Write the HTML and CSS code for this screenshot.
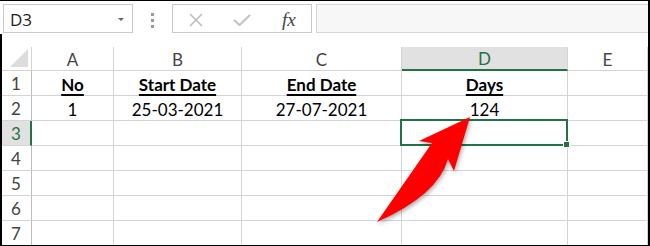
FILE: index.html
```html
<!DOCTYPE html>
<html lang="en">
<head>
    <meta charset="UTF-8">
    <title>Days between dates</title>
    <link rel="stylesheet" href="styles.css">
</head>
<body>
    <div class="frame">
        <div class="toolbar">
            <div class="name-box">
                <span>D3</span>
                <span class="caret"></span>
            </div>
            <div class="grip"><i></i><i></i><i></i></div>
            <div class="fx-buttons">
                <svg class="btn-icon" width="16" height="14" viewBox="0 0 16 14">
                    <path d="M2 1 L14 13 M14 1 L2 13" stroke="#bdbdbd" stroke-width="1.6" fill="none"/>
                </svg>
                <svg class="btn-icon" width="18" height="12" viewBox="0 0 18 12">
                    <path d="M1 6 L6.5 11 L17 1" stroke="#c4c4c4" stroke-width="2.2" fill="none"/>
                </svg>
                <span class="fx">fx</span>
            </div>
            <div class="formula-input"></div>
        </div>

        <div class="sheet">
            <div class="grid">
                <div class="corner"><span class="select-all"></span></div>
                <div class="col-head">A</div>
                <div class="col-head">B</div>
                <div class="col-head">C</div>
                <div class="col-head active">D</div>
                <div class="col-head">E</div>

                <div class="row-head">1</div>
                <div class="cell bold">No</div>
                <div class="cell bold">Start Date</div>
                <div class="cell bold">End Date</div>
                <div class="cell bold">Days</div>
                <div class="cell"></div>

                <div class="row-head">2</div>
                <div class="cell">1</div>
                <div class="cell">25-03-2021</div>
                <div class="cell">27-07-2021</div>
                <div class="cell">124</div>
                <div class="cell"></div>

                <div class="row-head active">3</div>
                <div class="cell"></div>
                <div class="cell"></div>
                <div class="cell"></div>
                <div class="cell selected"></div>
                <div class="cell"></div>

                <div class="row-head">4</div>
                <div class="cell"></div>
                <div class="cell"></div>
                <div class="cell"></div>
                <div class="cell"></div>
                <div class="cell"></div>

                <div class="row-head">5</div>
                <div class="cell"></div>
                <div class="cell"></div>
                <div class="cell"></div>
                <div class="cell"></div>
                <div class="cell"></div>

                <div class="row-head">6</div>
                <div class="cell"></div>
                <div class="cell"></div>
                <div class="cell"></div>
                <div class="cell"></div>
                <div class="cell"></div>

                <div class="row-head">7</div>
                <div class="cell"></div>
                <div class="cell"></div>
                <div class="cell"></div>
                <div class="cell"></div>
                <div class="cell"></div>
            </div>
        </div>

        <!-- callout arrow pointing at the result -->
        <svg class="arrow" width="650" height="246" viewBox="0 0 650 246">
            <path d="M470 117 L419 141 L432 143 L377 222 Q438 195 448 159 L454 171 Z" fill="#ff0000"/>
        </svg>
    </div>
</body>
</html>
```

FILE: styles.css
```css
body {
    margin: 0;
    background: #fff;
    font-family: Lato, "Liberation Sans", sans-serif;
}
.frame {
    position: relative;
    width: 650px;
    height: 246px;
    box-sizing: border-box;
    border-top: 1px solid #000;
    border-right: 2px solid #000;
    border-bottom: 1px solid #000;
    overflow: hidden;
    background: #fff;
}
.toolbar {
    display: flex;
    align-items: flex-start;
    height: 32px;
    padding-top: 3px;
    box-sizing: border-box;
}
.name-box {
    display: flex;
    align-items: center;
    justify-content: space-between;
    width: 130px;
    height: 29px;
    margin-left: 3px;
    padding: 2px 8px 0 6px;
    box-sizing: border-box;
    border: 1px solid #c8c8c8;
    font-family: "Open Sans", sans-serif;
    font-size: 17px;
    color: #222;
}
.caret {
    width: 0;
    height: 0;
    border-left: 3px solid transparent;
    border-right: 3px solid transparent;
    border-top: 3px solid #666;
}
.grip {
    display: flex;
    flex-direction: column;
    gap: 3px;
    margin: 9px 0 0 18px;
}
.grip i {
    display: block;
    width: 3px;
    height: 3px;
    background: #999;
}
.fx-buttons {
    display: flex;
    align-items: center;
    width: 140px;
    height: 29px;
    margin-left: 18px;
    padding-top: 3px;
    box-sizing: border-box;
    border: 1px solid #c8c8c8;
}
.btn-icon:first-child {
    margin-left: 15px;
}
.btn-icon:nth-child(2) {
    margin-left: 29px;
}
.fx {
    margin-left: 31px;
    font-family: "Liberation Serif", serif;
    font-style: italic;
    font-size: 19px;
    color: #444;
}
.formula-input {
    flex: 1;
    height: 29px;
    margin-left: 4px;
    box-sizing: border-box;
    border: 1px solid #d6d6d6;
    border-right: none;
    background: #f7f7f7;
}
.sheet {
    height: 213px;
    margin-top: 1px;
    padding-top: 13px;
    box-sizing: border-box;
    border-left: 2px solid #000;
}
.grid {
    display: grid;
    grid-template-columns: 30px 82px 128px 160px 166px 1fr;
    grid-template-rows: 24px repeat(7, 25px);
    font-size: 17px;
}
.grid > div {
    display: flex;
    align-items: center;
    justify-content: center;
    box-sizing: border-box;
    border-right: 1px solid #d4d4d4;
    border-bottom: 1px solid #d4d4d4;
}
.corner {
    position: relative;
}
.select-all {
    position: absolute;
    right: 3px;
    bottom: 3px;
    width: 0;
    height: 0;
    border-left: 18px solid transparent;
    border-bottom: 18px solid #dcdcdc;
}
.col-head {
    color: #444;
    padding-top: 1px;
}
.col-head.active {
    background: #e1e1e1;
    color: #217346;
    border-bottom: 2px solid #217346 !important;
}
.grid > .row-head {
    justify-content: flex-start;
    padding-left: 9px;
    color: #444;
    border-right-color: #bdbdbd;
}
.grid > .row-head.active {
    background: #e1e1e1;
    color: #217346;
    border-right: 2px solid #217346;
}
.cell {
    color: #000;
    padding-top: 2px;
}
.cell.bold {
    font-weight: bold;
    text-decoration: underline;
    text-decoration-thickness: 2px;
    text-underline-offset: 3px;
}
.cell.selected {
    position: relative;
}
.cell.selected::after {
    content: "";
    position: absolute;
    left: -2px;
    top: -2px;
    right: -1px;
    bottom: -1px;
    border: 2px solid #217346;
}
.cell.selected::before {
    content: "";
    position: absolute;
    right: -3px;
    bottom: -3px;
    width: 5px;
    height: 5px;
    background: #217346;
    border: 1px solid #fff;
    z-index: 1;
}
.arrow {
    position: absolute;
    left: 0;
    top: -1px;
    pointer-events: none;
    filter: drop-shadow(1px 2px 2px rgba(0, 0, 0, 0.35));
}
```
